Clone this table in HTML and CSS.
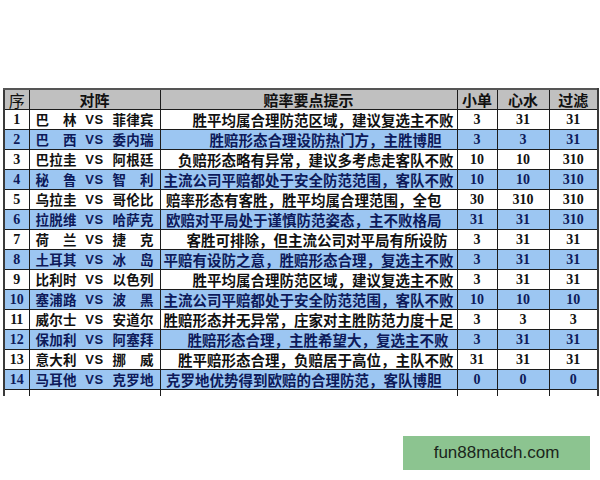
FILE: index.html
```html
<!DOCTYPE html>
<html lang="zh-CN">
<head>
<meta charset="utf-8">
<title>赔率要点提示</title>
<link rel="stylesheet" href="styles.css">
</head>
<body>
<div class="page">
<table class="odds">
<colgroup>
<col class="c-no"><col class="c-match"><col class="c-tip"><col class="c-a"><col class="c-b"><col class="c-c">
</colgroup>
<thead>
<tr><th class="h-no">序</th><th>对阵</th><th>赔率要点提示</th><th>小单</th><th>心水</th><th>过滤</th></tr>
</thead>
<tbody>
<tr><td class="no">1</td><td><div class="m"><span class="t">巴林</span><span class="vs">VS</span><span class="t">菲律宾</span></div></td><td class="tip">胜平均属合理防范区域，建议复选主不败</td><td class="n">3</td><td class="n">31</td><td class="n">31</td></tr>
<tr class="blue"><td class="no">2</td><td><div class="m"><span class="t">巴西</span><span class="vs">VS</span><span class="t">委内瑞</span></div></td><td class="tip p15">胜赔形态合理设防热门方，主胜博胆</td><td class="n">3</td><td class="n">3</td><td class="n">31</td></tr>
<tr><td class="no">3</td><td><div class="m"><span class="t">巴拉圭</span><span class="vs">VS</span><span class="t">阿根廷</span></div></td><td class="tip">负赔形态略有异常，建议多考虑走客队不败</td><td class="n">10</td><td class="n">10</td><td class="n">310</td></tr>
<tr class="blue"><td class="no">4</td><td><div class="m"><span class="t">秘鲁</span><span class="vs">VS</span><span class="t">智利</span></div></td><td class="tip">主流公司平赔都处于安全防范范围，客队不败</td><td class="n">10</td><td class="n">10</td><td class="n">310</td></tr>
<tr><td class="no">5</td><td><div class="m"><span class="t">乌拉圭</span><span class="vs">VS</span><span class="t">哥伦比</span></div></td><td class="tip p15">赔率形态有客胜，胜平均属合理范围，全包</td><td class="n">30</td><td class="n">310</td><td class="n">310</td></tr>
<tr class="blue"><td class="no">6</td><td><div class="m"><span class="t">拉脱维</span><span class="vs">VS</span><span class="t">哈萨克</span></div></td><td class="tip p15">欧赔对平局处于谨慎防范姿态，主不败格局</td><td class="n">31</td><td class="n">31</td><td class="n">310</td></tr>
<tr><td class="no">7</td><td><div class="m"><span class="t">荷兰</span><span class="vs">VS</span><span class="t">捷克</span></div></td><td class="tip p9">客胜可排除，但主流公司对平局有所设防</td><td class="n">3</td><td class="n">31</td><td class="n">31</td></tr>
<tr class="blue"><td class="no">8</td><td><div class="m"><span class="t">土耳其</span><span class="vs">VS</span><span class="t">冰岛</span></div></td><td class="tip">平赔有设防之意，胜赔形态合理，复选主不败</td><td class="n">3</td><td class="n">31</td><td class="n">31</td></tr>
<tr><td class="no">9</td><td><div class="m"><span class="t">比利时</span><span class="vs">VS</span><span class="t">以色列</span></div></td><td class="tip">胜平均属合理防范区域，建议复选主不败</td><td class="n">3</td><td class="n">31</td><td class="n">31</td></tr>
<tr class="blue"><td class="no">10</td><td><div class="m"><span class="t">塞浦路</span><span class="vs">VS</span><span class="t">波黑</span></div></td><td class="tip">主流公司平赔都处于安全防范范围，客队不败</td><td class="n">10</td><td class="n">10</td><td class="n">10</td></tr>
<tr><td class="no">11</td><td><div class="m"><span class="t">威尔士</span><span class="vs">VS</span><span class="t">安道尔</span></div></td><td class="tip">胜赔形态并无异常，庄家对主胜防范力度十足</td><td class="n">3</td><td class="n">3</td><td class="n">3</td></tr>
<tr class="blue"><td class="no">12</td><td><div class="m"><span class="t">保加利</span><span class="vs">VS</span><span class="t">阿塞拜</span></div></td><td class="tip p8">胜赔形态合理，主胜希望大，复选主不败</td><td class="n">3</td><td class="n">31</td><td class="n">31</td></tr>
<tr><td class="no">13</td><td><div class="m"><span class="t">意大利</span><span class="vs">VS</span><span class="t">挪威</span></div></td><td class="tip">胜平赔形态合理，负赔居于高位，主队不败</td><td class="n">31</td><td class="n">31</td><td class="n">31</td></tr>
<tr class="blue"><td class="no">14</td><td><div class="m"><span class="t">马耳他</span><span class="vs">VS</span><span class="t">克罗地</span></div></td><td class="tip p15">克罗地优势得到欧赔的合理防范，客队博胆</td><td class="n">0</td><td class="n">0</td><td class="n">0</td></tr>
<tr class="stub"><td></td><td></td><td></td><td></td><td></td><td></td></tr>
</tbody>
</table>
<div class="badge-row"><div class="badge">fun88match.com</div></div>
</div>
</body>
</html>
```
FILE: styles.css
```css
html, body {
  margin: 0;
  padding: 0;
  background: #ffffff;
}
.page {
  padding: 88px 3px 0 3px;
  font-family: "Noto Sans CJK SC", "Liberation Sans", sans-serif;
}
.odds {
  border-collapse: collapse;
  table-layout: fixed;
  width: 594px;
  color: #111111;
}
.c-no { width: 25px; }
.c-match { width: 131px; }
.c-tip { width: 297px; }
.c-a { width: 40px; }
.c-b { width: 52px; }
.c-c { width: 49px; }

.odds th, .odds td {
  border: 1px solid #1c1c1c;
  padding: 0;
  height: 19px;
  white-space: nowrap;
}
.odds td {
  line-height: 19px;
}
.odds tr > :first-child { border-left: 2px solid #3a3a3a; }
.odds tr > :last-child { border-right: 2px solid #3a3a3a; }
.odds thead th { border-top: 2px solid #555555; }

.odds th {
  background: #c0c0c0;
  font-size: 15px;
  line-height: 18px;
  font-weight: 700;
  text-align: center;
  color: #111111;
  vertical-align: middle;
}
.odds th.h-no { font-weight: 400; font-size: 16px; }

.odds td {
  background: #ffffff;
  font-weight: 700;
}
.odds tr.blue td {
  background: #9cc6f2;
  color: #0d1a5a;
}
.no, .n {
  text-align: center;
  font-family: "Liberation Serif", serif;
  font-size: 14px;
}
.m {
  display: flex;
  align-items: center;
  justify-content: space-between;
  padding: 0 6px 0 6px;
  font-size: 13.5px;
}
.t {
  width: 41px;
  text-align: justify;
  text-align-last: justify;
}
.vs {
  font-family: "Liberation Sans", sans-serif;
  font-size: 13px;
  letter-spacing: 0.5px;
}
.tip {
  text-align: right;
  padding-right: 3px !important;
  font-size: 14.5px;
}
.tip.p15 { padding-right: 15px !important; }
.tip.p9 { padding-right: 9px !important; }
.tip.p8 { padding-right: 8px !important; }

.odds tr.stub td {
  height: 6px;
  line-height: 6px;
  border-bottom: 0 none;
  background: #ffffff;
}

.badge-row {
  display: flex;
  justify-content: flex-end;
  padding-right: 7px;
  margin-top: 40px;
}
.badge {
  width: 187px;
  height: 34px;
  line-height: 34px;
  background: #8cc490;
  color: #1b261b;
  text-align: center;
  font-family: "Liberation Sans", sans-serif;
  font-size: 17px;
}
```
